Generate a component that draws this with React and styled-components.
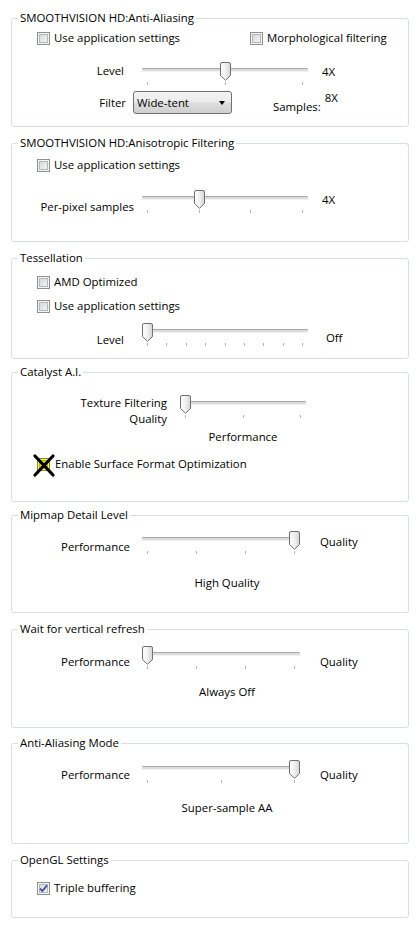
import React, { useId } from "react";
import styled, { createGlobalStyle } from "styled-components";

const Global = createGlobalStyle`
  html, body { margin: 0; padding: 0; background: #fff; }
  body {
    font-family: "Open Sans", "Noto Sans", "Liberation Sans", sans-serif;
    font-size: 11.4px;
    color: #000;
  }
  * { box-sizing: border-box; }
`;

const Page = styled.div`
  width: 409px;
  padding: 10px 0 0 11px;
  display: flex;
  flex-direction: column;
`;

const Group = styled.fieldset`
  margin: ${(p) => p.$mt || 0}px 0 0 0;
  padding: 0 0 ${(p) => p.$pb}px 0;
  border: 1px solid #d5dfe5;
  border-radius: 3px;
  min-width: 0;
`;

const Legend = styled.legend`
  margin-left: 6px;
  padding: 0 2px;
  line-height: 16px;
  font-size: 11.4px;
  white-space: nowrap;
`;

const Body = styled.div`
  display: flex;
  flex-direction: column;
`;

const CheckRow = styled.div`
  display: ${(p) => (p.$pair ? "grid" : "flex")};
  grid-template-columns: 213px auto;
  align-items: center;
  height: 16px;
  margin-top: ${(p) => p.$mt || 0}px;
  padding-left: 25px;
`;

const CheckLabel = styled.label`
  display: inline-flex;
  align-items: center;
  gap: ${(p) => p.$gap || 4}px;
  line-height: 16px;
  white-space: nowrap;
`;

const Box = styled.span`
  position: relative;
  flex: none;
  width: 13px;
  height: 13px;
  border: 1px solid ${(p) => (p.$mark ? "#8a8a18" : "#8e8f8f")};
  background: ${(p) =>
    p.$mark
      ? "linear-gradient(135deg, #d6d400, #eeee30)"
      : "linear-gradient(135deg, #cfd2d6 0%, #e9eaeb 60%, #f7f7f7 100%)"};
  box-shadow: ${(p) =>
    p.$mark
      ? "inset 0 0 0 1px #f4f46a, inset 0 0 0 2px #b8b800"
      : "inset 0 0 0 1px #f4f4f4, inset 0 0 0 2px #b3b7bc"};
  display: flex;
  align-items: center;
  justify-content: center;
`;

const CrossMark = styled.svg`
  position: absolute;
  left: -5px;
  top: -5px;
  width: 22px;
  height: 23px;
  overflow: visible;
`;

const SliderRow = styled.div`
  display: grid;
  grid-template-columns: ${(p) => p.$labelW}px ${(p) => p.$w}px auto;
  align-items: start;
  margin-top: ${(p) => p.$mt || 0}px;
`;

const RowLabel = styled.div`
  text-align: right;
  padding-right: ${(p) => p.$pr || 0}px;
  padding-top: ${(p) => p.$pt || 0}px;
  line-height: 16px;
  white-space: nowrap;
`;

const Value = styled.div`
  padding-left: ${(p) => p.$pl || 0}px;
  padding-top: ${(p) => p.$pt || 0}px;
  line-height: 16px;
  white-space: nowrap;
`;

const SliderBox = styled.div`
  position: relative;
  width: ${(p) => p.$w}px;
  height: 24px;
  padding-top: 6px;
`;

const Track = styled.div`
  height: 4px;
  border-top: 1px solid #a9a9a9;
  border-bottom: 1px solid #f2f2f2;
  background: #dcdcdc;
  border-radius: 1px;
`;

const Ticks = styled.div`
  display: flex;
  justify-content: space-between;
  padding: 0 5px;
  margin-top: 10px;
`;

const Tick = styled.span`
  width: 1px;
  height: 3px;
  background: #b4b4b4;
`;

const Thumb = styled.svg`
  position: absolute;
  top: 0;
  width: 11px;
  height: 19px;
`;

const Caption = styled.div`
  line-height: 16px;
  margin-top: ${(p) => p.$mt || 0}px;
  margin-left: ${(p) => p.$left}px;
  width: ${(p) => p.$w}px;
  text-align: center;
  white-space: nowrap;
`;

const FilterRow = styled.div`
  display: flex;
  align-items: center;
  margin-top: ${(p) => p.$mt || 0}px;
  height: 23px;
`;

const FilterLabel = styled(RowLabel)`
  width: 121px;
`;

const Select = styled.div`
  width: 99px;
  height: 23px;
  border: 1px solid #707070;
  border-radius: 3px;
  background: linear-gradient(#f3f3f3 0%, #ebebeb 48%, #dddddd 52%, #cfcfcf 100%);
  display: flex;
  align-items: center;
  justify-content: space-between;
  padding: 0 6px 0 3px;
  line-height: 16px;
`;

const Arrow = styled.span`
  width: 0;
  height: 0;
  border-left: 3.5px solid transparent;
  border-right: 3.5px solid transparent;
  border-top: 4px solid #000;
`;

const Samples = styled.div`
  margin-left: ${(p) => p.$ml}px;
  margin-top: ${(p) => p.$top || 0}px;
  line-height: 16px;
  white-space: nowrap;
`;

function Checkbox({ label, checked, cross }) {
  return (
    <CheckLabel $gap={cross ? 5 : 4}>
      <Box $mark={cross}>
        {checked && (
          <svg width="9" height="9" viewBox="0 0 9 9">
            <path d="M1 4.6 L3.4 7 L8 1.4" fill="none" stroke="#3a5190" strokeWidth="1.8" />
          </svg>
        )}
        {cross && (
          <CrossMark viewBox="0 0 22 23">
            <path d="M2 2 L20 21 M20 2 L2 21" stroke="#000" strokeWidth="3.2" strokeLinecap="round" />
          </CrossMark>
        )}
      </Box>
      {label}
    </CheckLabel>
  );
}

function Slider({ w, ticks, pos }) {
  const id = useId();
  const left = Math.round(pos * (w - 11));
  return (
    <SliderBox $w={w}>
      <Track />
      <Ticks>
        {Array.from({ length: ticks }).map((_, i) => (
          <Tick key={i} />
        ))}
      </Ticks>
      <Thumb viewBox="0 0 11 19" style={{ left }}>
        <defs>
          <linearGradient id={id} x1="0" y1="0" x2="1" y2="0">
            <stop offset="0" stopColor="#ffffff" />
            <stop offset="0.5" stopColor="#f0f0f0" />
            <stop offset="1" stopColor="#d4d4d4" />
          </linearGradient>
        </defs>
        <path
          d="M2 0.5 H9 Q10.5 0.5 10.5 2 V13.5 L5.5 18.3 L0.5 13.5 V2 Q0.5 0.5 2 0.5 Z"
          fill={`url(#${id})`}
          stroke="#707070"
          strokeWidth="1"
        />
      </Thumb>
    </SliderBox>
  );
}

export default function App() {
  return (
    <>
      <Global />
      <Page>
        <Group $pb={12}>
          <Legend>SMOOTHVISION HD:Anti-Aliasing</Legend>
          <Body>
            <CheckRow $pair $mt={4}>
              <Checkbox label="Use application settings" />
              <Checkbox label="Morphological filtering" />
            </CheckRow>
            <SliderRow $labelW={130} $w={166} $mt={16}>
              <RowLabel $pr={18} $pt={1}>Level</RowLabel>
              <Slider w={166} ticks={3} pos={0.5} />
              <Value $pl={14} $pt={2}>4X</Value>
            </SliderRow>
            <FilterRow $mt={5}>
              <FilterLabel $pr={7}>Filter</FilterLabel>
              <Select>
                Wide-tent
                <Arrow />
              </Select>
              <Samples $ml={41} $top={8}>Samples:</Samples>
              <Samples $ml={4} $top={-10}>8X</Samples>
            </FilterRow>
          </Body>
        </Group>

        <Group $mt={8} $pb={26}>
          <Legend>SMOOTHVISION HD:Anisotropic Filtering</Legend>
          <Body>
            <CheckRow $mt={6}>
              <Checkbox label="Use application settings" />
            </CheckRow>
            <SliderRow $labelW={130} $w={166} $mt={17}>
              <RowLabel $pr={8} $pt={9}>Per-pixel samples</RowLabel>
              <Slider w={166} ticks={4} pos={1 / 3} />
              <Value $pl={14} $pt={2}>4X</Value>
            </SliderRow>
          </Body>
        </Group>

        <Group $mt={8} $pb={10}>
          <Legend>Tessellation</Legend>
          <Body>
            <CheckRow $mt={8}>
              <Checkbox label="AMD Optimized" />
            </CheckRow>
            <CheckRow $mt={8}>
              <Checkbox label="Use application settings" />
            </CheckRow>
            <SliderRow $labelW={130} $w={166} $mt={9}>
              <RowLabel $pr={18} $pt={9}>Level</RowLabel>
              <Slider w={166} ticks={9} pos={0} />
              <Value $pl={18} $pt={7}>Off</Value>
            </SliderRow>
          </Body>
        </Group>

        <Group $mt={5} $pb={29}>
          <Legend>Catalyst A.I.</Legend>
          <Body>
            <SliderRow $labelW={168} $w={126} $mt={15}>
              <RowLabel $pr={13}>
                Texture Filtering
                <br />
                Quality
              </RowLabel>
              <Slider w={126} ticks={3} pos={0} />
            </SliderRow>
            <Caption $mt={2} $left={168} $w={126}>Performance</Caption>
            <CheckRow $mt={11}>
              <Checkbox label="Enable Surface Format Optimization" cross />
            </CheckRow>
          </Body>
        </Group>

        <Group $mt={5} $pb={21}>
          <Legend>Mipmap Detail Level</Legend>
          <Body>
            <SliderRow $labelW={130} $w={158} $mt={8}>
              <RowLabel $pr={12} $pt={8}>Performance</RowLabel>
              <Slider w={158} ticks={4} pos={1} />
              <Value $pl={20} $pt={3}>Quality</Value>
            </SliderRow>
            <Caption $mt={20} $left={136} $w={158}>High Quality</Caption>
          </Body>
        </Group>

        <Group $mt={8} $pb={27}>
          <Legend>Wait for vertical refresh</Legend>
          <Body>
            <SliderRow $labelW={130} $w={158} $mt={9}>
              <RowLabel $pr={12} $pt={8}>Performance</RowLabel>
              <Slider w={158} ticks={4} pos={0} />
              <Value $pl={20} $pt={8}>Quality</Value>
            </SliderRow>
            <Caption $mt={14} $left={136} $w={158}>Always Off</Caption>
          </Body>
        </Group>

        <Group $mt={7} $pb={27}>
          <Legend>Anti-Aliasing Mode</Legend>
          <Body>
            <SliderRow $labelW={130} $w={158} $mt={9}>
              <RowLabel $pr={12} $pt={7}>Performance</RowLabel>
              <Slider w={158} ticks={3} pos={1} />
              <Value $pl={20} $pt={7}>Quality</Value>
            </SliderRow>
            <Caption $mt={16} $left={136} $w={158}>Super-sample AA</Caption>
          </Body>
        </Group>

        <Group $mt={8} $pb={21}>
          <Legend>OpenGL Settings</Legend>
          <Body>
            <CheckRow $mt={12}>
              <Checkbox label="Triple buffering" checked />
            </CheckRow>
          </Body>
        </Group>
      </Page>
    </>
  );
}
